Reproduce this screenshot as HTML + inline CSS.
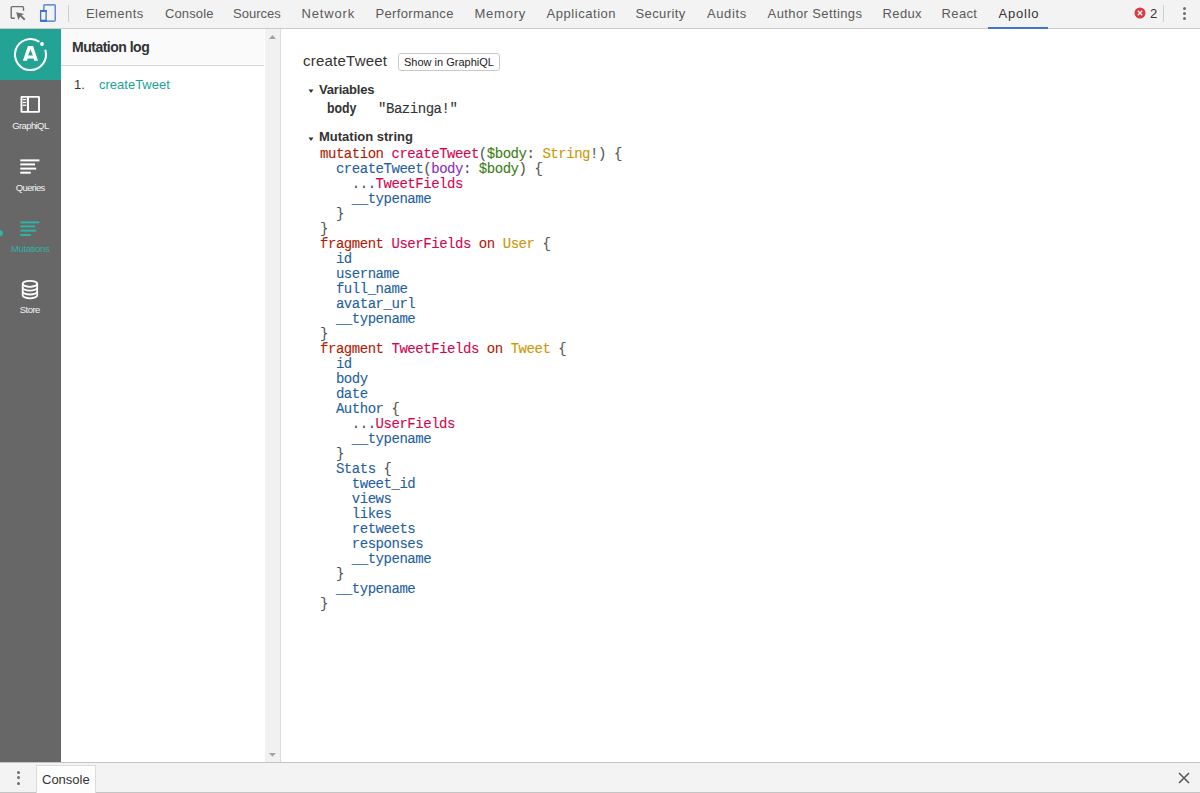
<!DOCTYPE html>
<html><head><meta charset="utf-8">
<style>
*{box-sizing:border-box}
html,body{margin:0;padding:0;width:1200px;height:793px;overflow:hidden;background:#fff;font-family:"Liberation Sans",sans-serif}
.abs{position:absolute}
#tb{position:absolute;left:0;top:0;width:1200px;height:29px;background:#f3f3f3;border-bottom:1px solid #cbcbcb}
.tab{position:absolute;top:6px;font-size:13px;color:#5a5a5a;white-space:nowrap;line-height:15px}
#side{position:absolute;left:0;top:29px;width:61px;height:733px;background:#676767}
#logo{position:absolute;left:0;top:0;width:61px;height:51px;background:#22a394}
.sl{position:absolute;font-size:9.5px;color:#f2f2f2;white-space:nowrap;line-height:11px}
#log{position:absolute;left:61px;top:29px;width:204px;height:733px;background:#fff}
#loghd{position:absolute;left:0;top:0;width:203px;height:37px;background:#fafafa;border-bottom:1px solid #d6d6d6}
#sb{position:absolute;left:265px;top:29px;width:16px;height:733px;background:#f1f1f1;border-right:1px solid #dadada}
#main{position:absolute;left:281px;top:29px;width:919px;height:733px;background:#fff}
#drawer{position:absolute;left:0;top:762px;width:1200px;height:31px;background:#f3f3f3;border-top:1px solid #c4c4c4;border-bottom:1px solid #c4c4c4}
pre{margin:0;font-family:"Liberation Mono",monospace;font-size:14px;letter-spacing:-0.46px;line-height:15px;color:#555;-webkit-text-stroke:0.1px currentColor}
.k{color:#B11A04}.d{color:#D2054E}.p{color:#1F61A0}.at{color:#8B2BB9}.v{color:#397D13}.a{color:#CA9800}.pu{color:#555}
</style></head>
<body>
<div id="tb">
  <!-- inspect icon -->
  <svg class="abs" style="left:9px;top:4px" width="18" height="18" viewBox="0 0 18 18">
    <path d="M5.8 14.3H3.2a1 1 0 0 1-1-1V3.64a1 1 0 0 1 1-1H13.5a1 1 0 0 1 1 1V6.8" fill="none" stroke="#6e6e6e" stroke-width="1.4"/>
    <path d="M7.15 8.15L15.2 10.1L12.5 11.2L16.4 15.1L15.1 16.4L11.2 12.5L9.4 15.9Z" fill="#6e6e6e"/>
  </svg>
  <!-- device icon -->
  <svg class="abs" style="left:38px;top:4px" width="20" height="19" viewBox="0 0 20 19">
    <rect x="5.9" y="0.8" width="11.3" height="16.3" rx="0.8" fill="none" stroke="#3d70cf" stroke-width="1.2"/>
    <rect x="2.6" y="6.6" width="5.5" height="10.5" fill="#f3f3f3" stroke="#3d70cf" stroke-width="1.3"/>
    <rect x="2" y="6" width="6.7" height="2" fill="#3d70cf"/>
    <rect x="2" y="15.7" width="6.7" height="2" fill="#3d70cf"/>
  </svg>
  <div class="abs" style="left:68px;top:5px;width:1px;height:17px;background:#cfcfcf"></div>
  <div class="tab" style="left:86px;letter-spacing:0.43px">Elements</div>
  <div class="tab" style="left:165px;letter-spacing:0.12px">Console</div>
  <div class="tab" style="left:233px;letter-spacing:0px">Sources</div>
  <div class="tab" style="left:301.4px;letter-spacing:0.87px">Network</div>
  <div class="tab" style="left:375.4px;letter-spacing:0.36px">Performance</div>
  <div class="tab" style="left:474.4px;letter-spacing:0.8px">Memory</div>
  <div class="tab" style="left:546.6px;letter-spacing:0.54px">Application</div>
  <div class="tab" style="left:635.4px;letter-spacing:0.43px">Security</div>
  <div class="tab" style="left:707px;letter-spacing:0.6px">Audits</div>
  <div class="tab" style="left:767.6px;letter-spacing:0.39px">Author Settings</div>
  <div class="tab" style="left:882.6px;letter-spacing:0.35px">Redux</div>
  <div class="tab" style="left:941.6px;letter-spacing:0.35px">React</div>
  <div class="tab" style="left:998.6px;color:#333;letter-spacing:0.76px">Apollo</div>
  <div class="abs" style="left:988px;top:27px;width:60px;height:2px;background:#3e78c8"></div>
  <svg class="abs" style="left:1134px;top:7px" width="12" height="12" viewBox="0 0 12 12">
    <circle cx="6" cy="6" r="5.5" fill="#d93a3f"/>
    <path d="M3.8 3.8l4.4 4.4M8.2 3.8l-4.4 4.4" stroke="#fff" stroke-width="1.3"/>
  </svg>
  <div class="tab" style="left:1150px;color:#333">2</div>
  <div class="abs" style="left:1163px;top:5px;width:1px;height:17px;background:#cfcfcf"></div>
  <div class="abs" style="left:1183px;top:7px;width:3px;height:3px;border-radius:50%;background:#6e6e6e"></div>
  <div class="abs" style="left:1183px;top:12px;width:3px;height:3px;border-radius:50%;background:#6e6e6e"></div>
  <div class="abs" style="left:1183px;top:17px;width:3px;height:3px;border-radius:50%;background:#6e6e6e"></div>
</div>

<div id="side">
  <div id="logo">
    <svg class="abs" style="left:0;top:0" width="61" height="51" viewBox="0 0 61 51">
      <path d="M45.24 20.76A15.5 15.5 0 1 1 39.39 12.85" fill="none" stroke="#fff" stroke-width="2.1"/>
      <circle cx="42" cy="15" r="1.9" fill="#fff"/>
      <path fill="#fff" fill-rule="evenodd" d="M22.9 31.7L27.9 16.9H33.1L38 31.7H34.3L33.6 29.6H27.7L27 31.7Z M28.1 26.4L30.5 20.4L32.9 26.4Z"/>
    </svg>
  </div>
  <svg class="abs" style="left:0;top:0" width="61" height="300" viewBox="0 0 61 300">
    <!-- graphiql -->
    <rect x="21.5" y="67.9" width="17.5" height="15" rx="0.3" fill="none" stroke="#fff" stroke-width="1.9"/>
    <rect x="26.9" y="67.5" width="2.1" height="15.5" fill="#fff"/>
    <rect x="22.9" y="69.9" width="3.3" height="1.3" fill="#fff"/>
    <rect x="22.9" y="72.8" width="3.3" height="1.3" fill="#fff"/>
    <rect x="22.9" y="75.6" width="3.3" height="1.3" fill="#fff"/>
    <!-- queries -->
    <g fill="#fff">
      <rect x="20.3" y="130.4" width="19.1" height="2"/>
      <rect x="20.3" y="134.4" width="14.7" height="2"/>
      <rect x="20.3" y="138.6" width="15.9" height="2"/>
      <rect x="20.3" y="142.7" width="10.4" height="2"/>
    </g>
    <!-- mutations -->
    <g fill="#2fb3a3">
      <rect x="20.3" y="192.4" width="19.1" height="2"/>
      <rect x="20.3" y="196.4" width="14.7" height="2"/>
      <rect x="20.3" y="200.7" width="15.9" height="2"/>
      <rect x="20.3" y="205" width="10.4" height="2"/>
    </g>
    <circle cx="0" cy="204.3" r="3" fill="#2fb3a3"/>
    <!-- store -->
    <g fill="none" stroke="#fff" stroke-width="1.8">
      <ellipse cx="29.95" cy="254.8" rx="7.25" ry="3"/>
      <path d="M22.7 254.8V266.3A7.25 3 0 0 0 37.2 266.3V254.8"/>
      <path d="M22.7 258.6A7.25 3 0 0 0 37.2 258.6"/>
      <path d="M22.7 262.5A7.25 3 0 0 0 37.2 262.5"/>
    </g>
  </svg>
  <div class="sl" style="left:12.2px;top:91px;letter-spacing:-0.6px">GraphiQL</div>
  <div class="sl" style="left:15.7px;top:153px;letter-spacing:-0.6px">Queries</div>
  <div class="sl" style="left:11px;top:213.5px;color:#2fb3a3;letter-spacing:-0.3px">Mutations</div>
  <div class="sl" style="left:19.7px;top:275px;letter-spacing:-0.5px">Store</div>
</div>

<div id="log">
  <div id="loghd"></div>
  <div class="abs" style="left:11px;top:10px;font-size:14px;font-weight:bold;color:#333;line-height:16px;letter-spacing:-0.5px">Mutation log</div>
  <div class="abs" style="left:13px;top:48px;font-size:13px;color:#333;line-height:15px">1.</div>
  <div class="abs" style="left:38px;top:48px;font-size:13px;color:#22a394;line-height:15px">createTweet</div>
</div>
<div id="sb">
  <svg class="abs" style="left:0;top:0" width="15" height="733" viewBox="0 0 15 733">
    <path d="M4 10L7.5 6L11 10Z" fill="#a3a3a3"/>
    <path d="M4 724L7.5 727.8L11 724Z" fill="#a3a3a3"/>
  </svg>
</div>
<div id="main">
  <div class="abs" style="left:22px;top:23px;font-size:15px;color:#333;line-height:17px;letter-spacing:0.23px">createTweet</div>
  <div class="abs" style="left:117px;top:24px;width:102px;height:18px;border:1px solid #c8c8c8;border-radius:3px;background:#fff"></div>
  <div class="abs" style="left:123px;top:26px;font-size:11px;color:#222;line-height:14px">Show in GraphiQL</div>
  <svg class="abs" style="left:27px;top:59px" width="6" height="6" viewBox="0 0 6 6"><path d="M0.5 1.5H5.5L3 5Z" fill="#333"/></svg>
  <div class="abs" style="left:38px;top:53px;font-size:13px;font-weight:bold;color:#333;line-height:15px;letter-spacing:-0.2px">Variables</div>
  <div class="abs" style="left:46px;top:71px;font-size:14px;font-weight:bold;color:#333;line-height:16px;transform:scaleX(0.88);transform-origin:0 0">body</div>
  <pre class="abs" style="left:97px;top:73px;color:#333">"Bazinga!"</pre>
  <svg class="abs" style="left:27px;top:107px" width="6" height="6" viewBox="0 0 6 6"><path d="M0.5 1.5H5.5L3 5Z" fill="#333"/></svg>
  <div class="abs" style="left:38px;top:100px;font-size:13px;font-weight:bold;color:#333;line-height:15px">Mutation string</div>
<pre class="abs" style="left:39px;top:118px"><span class="k">mutation</span> <span class="d">createTweet</span>(<span class="v">$body</span>: <span class="a">String</span>!) {
  <span class="p">createTweet</span>(<span class="at">body</span>: <span class="v">$body</span>) {
    ...<span class="d">TweetFields</span>
    <span class="p">__typename</span>
  }
}
<span class="k">fragment</span> <span class="d">UserFields</span> <span class="k">on</span> <span class="a">User</span> {
  <span class="p">id</span>
  <span class="p">username</span>
  <span class="p">full_name</span>
  <span class="p">avatar_url</span>
  <span class="p">__typename</span>
}
<span class="k">fragment</span> <span class="d">TweetFields</span> <span class="k">on</span> <span class="a">Tweet</span> {
  <span class="p">id</span>
  <span class="p">body</span>
  <span class="p">date</span>
  <span class="p">Author</span> {
    ...<span class="d">UserFields</span>
    <span class="p">__typename</span>
  }
  <span class="p">Stats</span> {
    <span class="p">tweet_id</span>
    <span class="p">views</span>
    <span class="p">likes</span>
    <span class="p">retweets</span>
    <span class="p">responses</span>
    <span class="p">__typename</span>
  }
  <span class="p">__typename</span>
}</pre>
</div>
<div id="drawer">
  <div class="abs" style="left:17px;top:7.5px;width:3px;height:3px;border-radius:50%;background:#6e6e6e"></div>
  <div class="abs" style="left:17px;top:13px;width:3px;height:3px;border-radius:50%;background:#6e6e6e"></div>
  <div class="abs" style="left:17px;top:18.5px;width:3px;height:3px;border-radius:50%;background:#6e6e6e"></div>
  <div class="abs" style="left:36px;top:2px;width:60px;height:28px;background:#fdfdfd;border:1px solid #dcdcdc;border-bottom:none"></div>
  <div class="abs" style="left:42px;top:9px;font-size:13px;color:#333;line-height:15px">Console</div>
  <svg class="abs" style="left:1178px;top:9px" width="12" height="12" viewBox="0 0 12 12"><path d="M1 1L11 11M11 1L1 11" stroke="#5a5a5a" stroke-width="1.6"/></svg>
</div>
</body></html>
